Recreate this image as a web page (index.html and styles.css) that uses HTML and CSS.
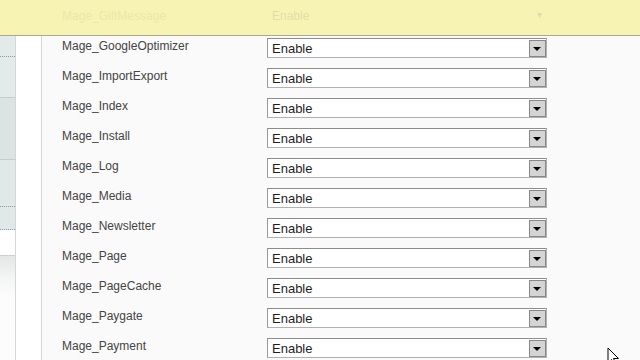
FILE: index.html
```html
<!DOCTYPE html>
<html>
<head>
<meta charset="utf-8">
<link rel="stylesheet" href="styles.css">
</head>
<body>
<div class="page">
  <div class="topbar">
    <div class="ghost-row">
      <span class="ghost-label">Mage_GiftMessage</span>
      <span class="ghost-select">Enable<span class="ghost-arrow">▾</span></span>
    </div>
  </div>
  <div class="main">
    <div class="sidebar">
      <div class="panel p1"><div class="dot"></div></div>
      <div class="panel p2"></div>
      <div class="panel p3"><div class="dot d2"></div></div>
      <div class="gap"></div>
      <div class="panel p4"></div>
    </div>
    <div class="gutter"></div>
    <div class="content">
      <div class="row"><span class="label">Mage_GoogleOptimizer</span><div class="select"><span>Enable</span><span class="arrow"></span></div></div>
      <div class="row"><span class="label">Mage_ImportExport</span><div class="select"><span>Enable</span><span class="arrow"></span></div></div>
      <div class="row"><span class="label">Mage_Index</span><div class="select"><span>Enable</span><span class="arrow"></span></div></div>
      <div class="row"><span class="label">Mage_Install</span><div class="select"><span>Enable</span><span class="arrow"></span></div></div>
      <div class="row"><span class="label">Mage_Log</span><div class="select"><span>Enable</span><span class="arrow"></span></div></div>
      <div class="row"><span class="label">Mage_Media</span><div class="select"><span>Enable</span><span class="arrow"></span></div></div>
      <div class="row"><span class="label">Mage_Newsletter</span><div class="select"><span>Enable</span><span class="arrow"></span></div></div>
      <div class="row"><span class="label">Mage_Page</span><div class="select"><span>Enable</span><span class="arrow"></span></div></div>
      <div class="row"><span class="label">Mage_PageCache</span><div class="select"><span>Enable</span><span class="arrow"></span></div></div>
      <div class="row"><span class="label">Mage_Paygate</span><div class="select"><span>Enable</span><span class="arrow"></span></div></div>
      <div class="row"><span class="label">Mage_Payment</span><div class="select"><span>Enable</span><span class="arrow"></span></div></div>
    </div>
  </div>
  <svg class="cursor" width="14" height="20" viewBox="0 0 14 20"><path d="M1 1 L1 16 L4.5 12.5 L7 18 L9 17 L6.5 11.5 L11.5 11.5 Z" fill="#fff" stroke="#000" stroke-width="1"/></svg>
</div>
</body>
</html>
```
FILE: styles.css
```css
html, body {
  margin: 0;
  padding: 0;
}
body {
  width: 640px;
  height: 360px;
  overflow: hidden;
  font-family: "Liberation Sans", Arial, sans-serif;
  background: #fbfafa;
}
.page {
  position: relative;
  width: 640px;
  height: 360px;
  overflow: hidden;
}
.topbar {
  height: 35px;
  background: #f7f4b3;
  border-bottom: 1px solid #aaa793;
  box-sizing: content-box;
}
.ghost-row {
  display: flex;
  padding: 9px 0 0 62px;
  font-size: 12px;
  color: #ebe7aa;
}
.ghost-label {
  width: 210px;
}
.ghost-select {
  display: flex;
  width: 270px;
  justify-content: space-between;
  color: #e2deaa;
}
.ghost-arrow {
  color: #e0dcaa;
  font-size: 10px;
}
.main {
  display: flex;
  height: 324px;
}
.sidebar {
  width: 15px;
  display: flex;
  flex-direction: column;
  border-right: 1px solid #d6d6d6;
}
.panel {
  position: relative;
  background: #e2eaea;
  border-bottom: 1px solid #c6cccc;
}
.p1 { height: 61px; }
.p2 { height: 61px; background: #dbe3e3; }
.p3 { height: 69px; background: #e0e8e8; border-bottom: 1px dotted #8d9a9a; }
.p4 { flex: 1; background: linear-gradient(#e4e6e6, #f4f5f5 22px, #fcfcfc 40px); border-top: 1px solid #cfcfcf; border-bottom: 0; }
.gap { height: 25px; background: #fff; }
.dot {
  position: absolute;
  left: 0;
  right: 0;
  top: 20px;
  border-top: 1px dotted #8d9a9a;
}
.d2 { top: 46px; }
.gutter {
  width: 25px;
  background: #fff;
  border-right: 1px solid #d4d4d4;
}
.content {
  flex: 1;
  padding-left: 20px;
  background: #fbfafa;
}
.row {
  display: flex;
  height: 30px;
  align-items: flex-start;
  padding-top: 2px;
  box-sizing: border-box;
}
.label {
  width: 205px;
  font-size: 12px;
  line-height: 16px;
  color: #444;
}
.select {
  width: 280px;
  height: 20px;
  box-sizing: border-box;
  border: 1px solid #b0b0b0;
  border-top-color: #8c8c8c;
  border-left-color: #9a9a9a;
  background: #fff;
  display: flex;
  align-items: center;
  justify-content: space-between;
  font-size: 13px;
  color: #1e1e1e;
  padding-left: 4px;
}
.arrow {
  width: 17px;
  height: 17px;
  box-sizing: border-box;
  margin-right: 0;
  background: #d4d4d4;
  border: 1px solid #888;
  position: relative;
}
.arrow::after {
  content: "";
  position: absolute;
  left: 3px;
  top: 6px;
  border-left: 4px solid transparent;
  border-right: 4px solid transparent;
  border-top: 4px solid #000;
}
.cursor {
  position: absolute;
  left: 607px;
  top: 347px;
}
```
